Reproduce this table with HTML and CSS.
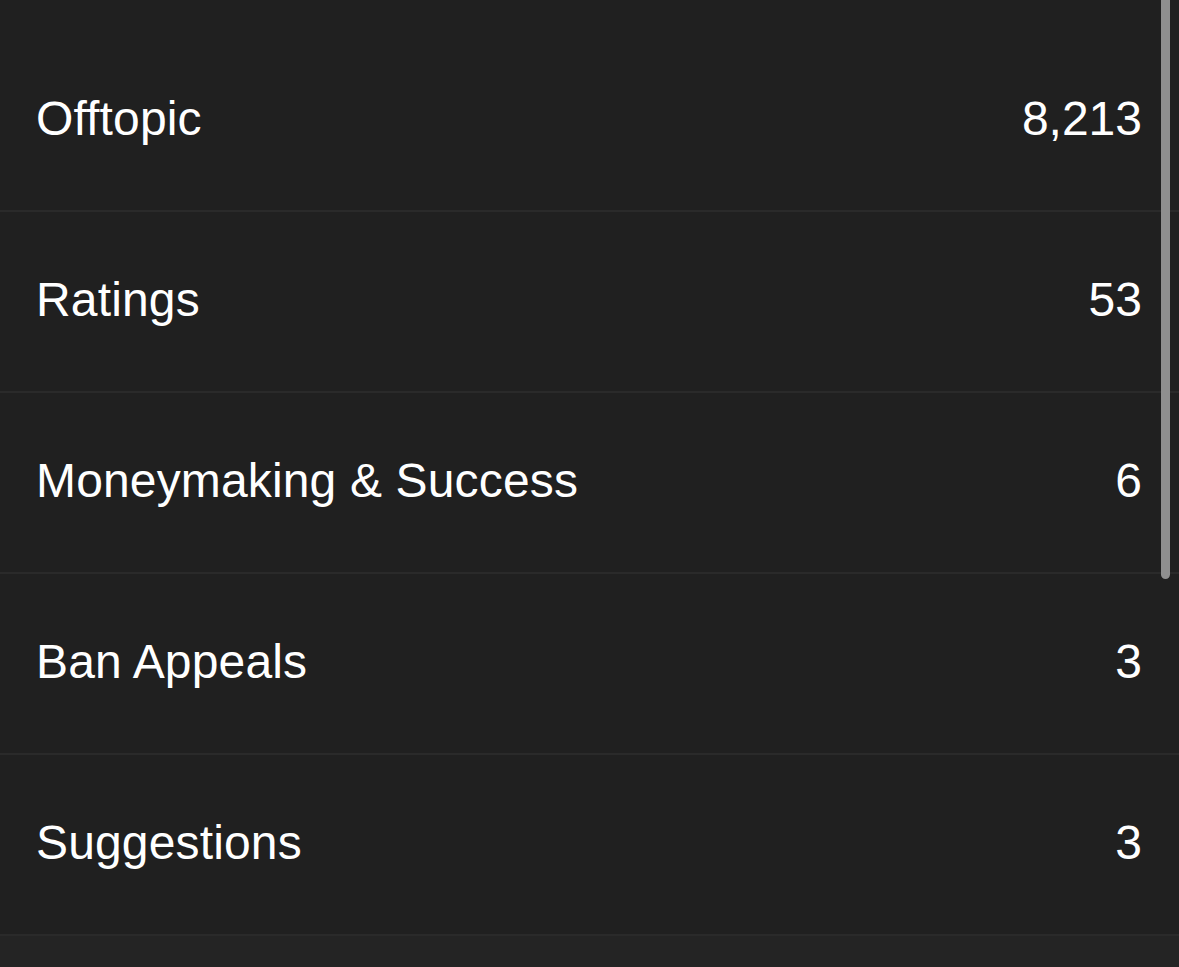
FILE: index.html
```html
<!DOCTYPE html>
<html>
<head>
<meta charset="utf-8">
<link rel="stylesheet" href="styles.css">
</head>
<body>
<div class="page">
  <ul class="list">
    <li class="row"><span class="name">Offtopic</span><span class="count">8,213</span></li>
    <li class="row"><span class="name">Ratings</span><span class="count">53</span></li>
    <li class="row"><span class="name">Moneymaking &amp; Success</span><span class="count">6</span></li>
    <li class="row"><span class="name">Ban Appeals</span><span class="count">3</span></li>
    <li class="row"><span class="name">Suggestions</span><span class="count">3</span></li>
  </ul>
  <div class="footer"></div>
  <div class="scrollbar"></div>
</div>
</body>
</html>
```

FILE: styles.css
```css
html, body {
  margin: 0;
  padding: 0;
  background: #202020;
}
body {
  font-family: "Liberation Sans", Arial, sans-serif;
  color: #ffffff;
  overflow: hidden;
}
.page {
  position: relative;
  width: 1179px;
  height: 967px;
  overflow: hidden;
  display: flex;
  flex-direction: column;
}
.list {
  list-style: none;
  margin: 0;
  padding: 31px 0 0 0;
}
.row {
  height: 179px;
  border-bottom: 2px solid #2a2a2a;
  display: flex;
  align-items: center;
  justify-content: space-between;
  padding: 0 37px 0 36px;
  font-size: 48px;
  line-height: 1;
}
.name {
  display: block;
  margin-top: -3px;
  letter-spacing: 0.15px;
}
.count {
  display: block;
  margin-top: -3px;
}
.footer {
  flex: 1;
  background: #242424;
}
.scrollbar {
  position: absolute;
  top: -10px;
  left: 1161px;
  width: 9px;
  height: 589px;
  border-radius: 5px;
  background: #8f8f8f;
}
```
